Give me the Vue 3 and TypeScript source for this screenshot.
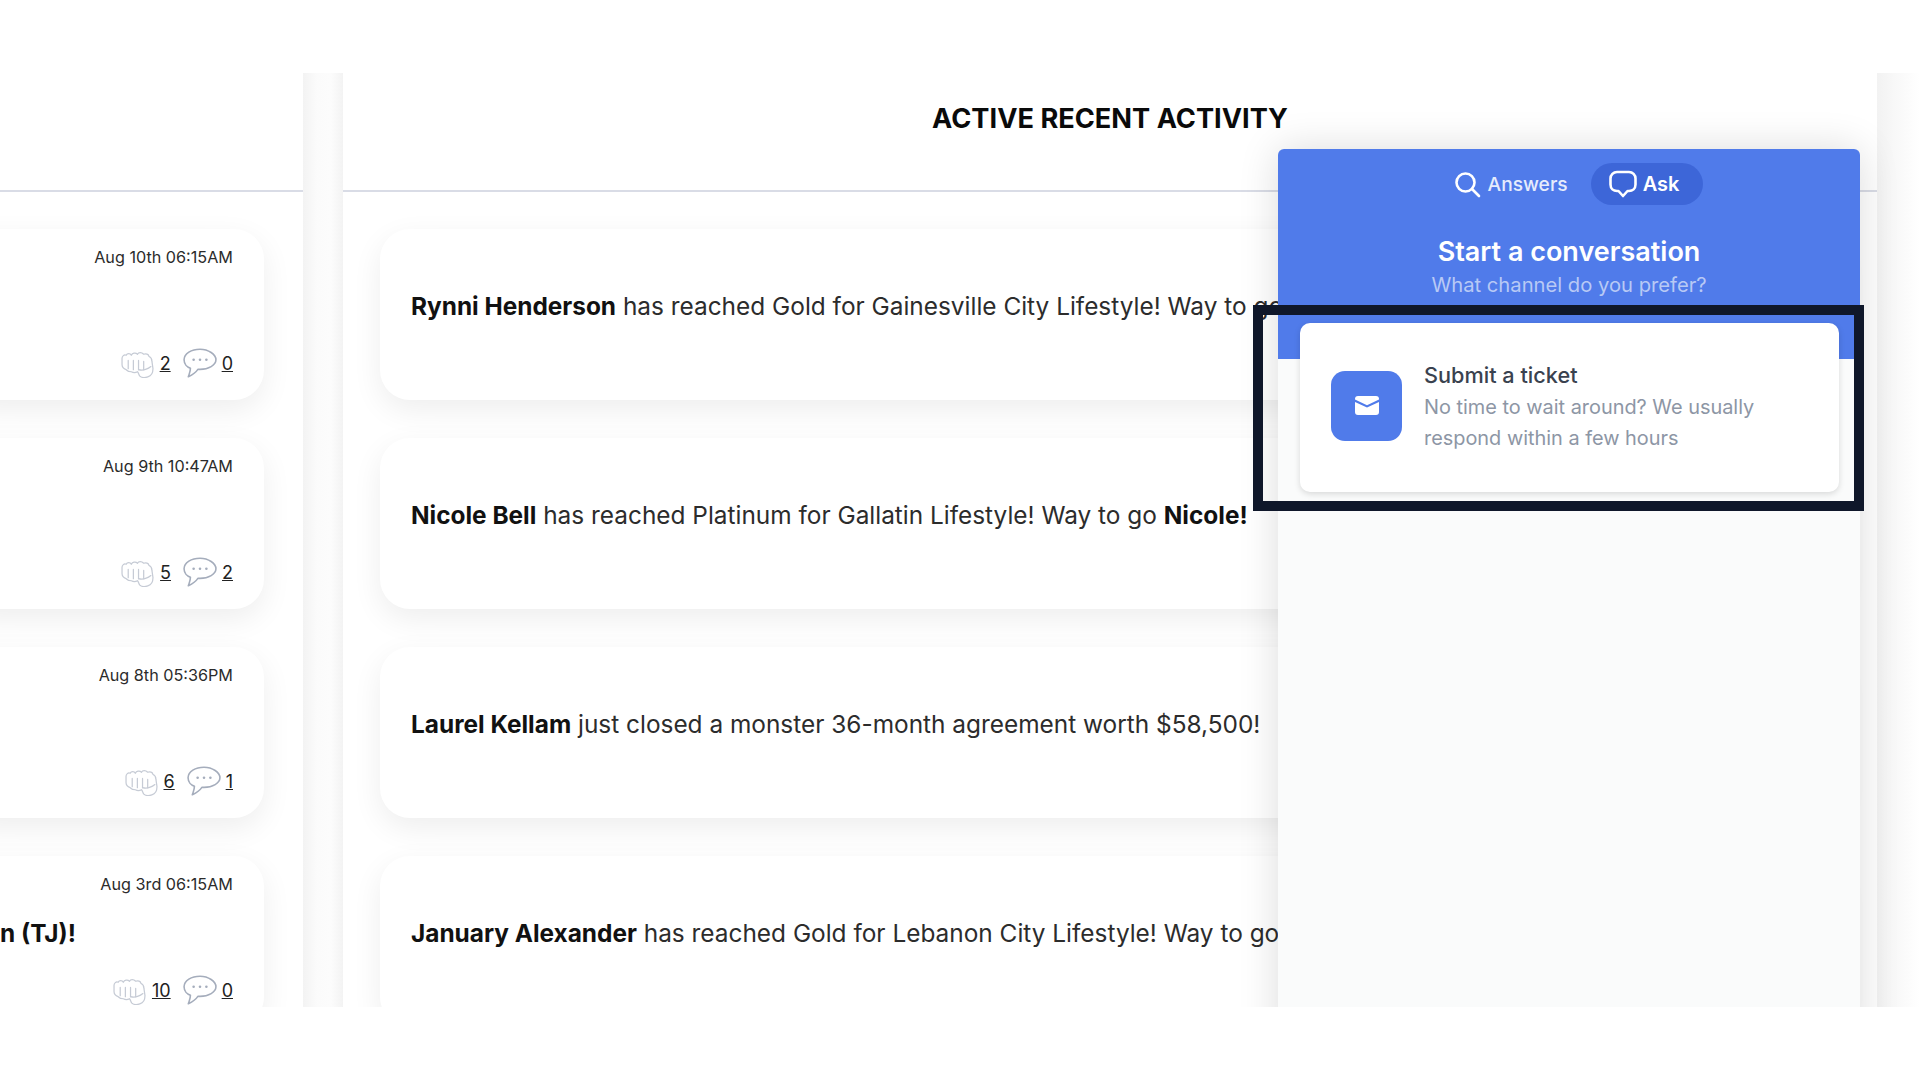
<script setup lang="ts">
interface LeftCard { date: string; text?: string; fist: string; chat: string }
const leftCards: LeftCard[] = [
  { date: 'Aug 10th 06:15AM', fist: '2', chat: '0' },
  { date: 'Aug 9th 10:47AM', fist: '5', chat: '2' },
  { date: 'Aug 8th 05:36PM', fist: '6', chat: '1' },
  { date: 'Aug 3rd 06:15AM', text: 'n (TJ)!', fist: '10', chat: '0' },
]
interface Row { name: string; rest: string; tail?: string }
const rows: Row[] = [
  { name: 'Rynni Henderson', rest: ' has reached Gold for Gainesville City Lifestyle! Way to go ', tail: 'Rynni!' },
  { name: 'Nicole Bell', rest: ' has reached Platinum for Gallatin Lifestyle! Way to go ', tail: 'Nicole!' },
  { name: 'Laurel Kellam', rest: ' just closed a monster 36-month agreement worth $58,500!' },
  { name: 'January Alexander', rest: ' has reached Gold for Lebanon City Lifestyle! Way to go ', tail: 'January!' },
]
</script>

<template>
  <div class="page">
    <div class="stage">
      <section class="col col-left">
        <header class="col-head"></header>
        <div class="list">
          <article v-for="c in leftCards" :key="c.date" class="card left-card">
            <div class="date">{{ c.date }}</div>
            <div class="left-text">{{ c.text }}</div>
            <div class="stats">
              <svg class="fist" viewBox="0 0 32 28" fill="none" stroke="#c6cbd5" stroke-width="1.2" stroke-linecap="round" stroke-linejoin="round">
                <path d="M1 9c0-2 2-4 4-3 1-2 4-2 5 0 1-2 4-3 6-1 1-2 4-2 6 0 2-1 5 0 5 2 2 1 3 3 3 5l1 7c0 4-2 7-5 8-3 1-6 1-8-1-1-2-1-3-2-4-2 1-4 1-6 0-2 0-4-1-5-2-3-1-4-3-4-5z" />
                <path d="M7 11v8M12 11v9M17 11v9M22 12v8" />
                <path d="M17 20c3 1 8 0 12-3" />
              </svg>
              <span class="num">{{ c.fist }}</span>
              <svg class="chat" viewBox="0 0 32 28" fill="none" stroke="#a5adbc" stroke-width="1.5" stroke-linejoin="round">
                <path d="M16 1C8 1 1 5 1 11c0 4 3 7 6 8 0 3-1 5-2 8 4-2 7-4 9-7h2c8 0 15-4 15-9S24 1 16 1z" />
                <circle cx="10" cy="11" r="1.2" fill="#a5adbc" stroke="none" />
                <circle cx="16" cy="11" r="1.2" fill="#a5adbc" stroke="none" />
                <circle cx="22" cy="11" r="1.2" fill="#a5adbc" stroke="none" />
              </svg>
              <span class="num">{{ c.chat }}</span>
            </div>
          </article>
        </div>
      </section>

      <div class="divider"></div>

      <section class="col col-right">
        <header class="col-head">
          <h2 class="title">ACTIVE RECENT ACTIVITY</h2>
        </header>
        <div class="list list-right">
          <article v-for="r in rows" :key="r.name" class="card right-card">
            <p class="row-text"><b>{{ r.name }}</b>{{ r.rest }}<b v-if="r.tail">{{ r.tail }}</b></p>
          </article>
        </div>
      </section>

      <div class="edge"></div>

      <aside class="widget">
        <div class="w-head">
          <nav class="tabs">
            <span class="tab">
              <svg width="28" height="28" viewBox="0 0 28 28" fill="none" stroke="#fff" stroke-width="2.6" stroke-linecap="round">
                <circle cx="12.5" cy="12.5" r="9" />
                <path d="M19 19l7 7" />
              </svg>
              Answers
            </span>
            <span class="tab tab-on">
              <svg width="28" height="28" viewBox="0 0 28 28" fill="none" stroke="#fff" stroke-width="2.6" stroke-linejoin="round">
                <path d="M8 2h12a6.500 6.500 0 0 1 6.500 6.500v6c0 4-3 6.500-6.500 6.500h-1.500L14 26l-4.500-5H8c-3.500 0-6.500-2.500-6.500-6.500v-6A6.500 6.500 0 0 1 8 2z" />
              </svg>
              Ask
            </span>
          </nav>
          <h3 class="w-title">Start a conversation</h3>
          <p class="w-sub">What channel do you prefer?</p>
        </div>
        <div class="ticket">
          <div class="t-icon">
            <svg width="24" height="19" viewBox="0 0 24 19">
              <path d="M3 0h18a3 3 0 0 1 3 3v.6l-12 5.600L0 3.600V3a3 3 0 0 1 3-3z" fill="#fff" />
              <path d="M0 6l12 5.600L24 6v10a3 3 0 0 1-3 3H3a3 3 0 0 1-3-3z" fill="#fff" />
            </svg>
          </div>
          <div class="t-body">
            <div class="t-title">Submit a ticket</div>
            <div class="t-desc">No time to wait around? We usually respond within a few hours</div>
          </div>
        </div>
      </aside>

      <div class="frame"></div>
    </div>
  </div>
</template>

<style scoped>
.page {
  height: 1080px;
  overflow: hidden;
  background: #fff;
  padding-top: 73px;
  box-sizing: border-box;
  font-family: Inter, "Liberation Sans", sans-serif;
}
.stage {
  position: relative;
  height: 934px;
  width: 1920px;
  overflow: hidden;
  display: flex;
  background: #fff;
}
.col { background: #fff; flex: none; box-sizing: border-box; }
.col-left { width: 303px; }
.col-right { width: 1534px; }
.divider {
  width: 40px;
  flex: none;
  background: linear-gradient(90deg, #f3f3f3 0, #fbfbfb 35%, #fcfcfc 70%, #f3f3f3 100%);
}
.edge {
  width: 43px;
  flex: none;
  background: linear-gradient(90deg, #f2f2f2 0, #f8f8f8 40%, #fff 100%);
}
.col-head {
  height: 119px;
  border-bottom: 2px solid #d9dce6;
  box-sizing: border-box;
  display: flex;
  align-items: center;
  justify-content: center;
  padding-bottom: 26px;
}
.title {
  margin: 0;
  font-size: 27.200px;
  line-height: 34px;
  font-weight: 700;
  color: #0a0a0a;
  white-space: nowrap;
}
.list {
  display: flex;
  flex-direction: column;
  gap: 38px;
  padding-top: 37px;
}
.card {
  background: #fff;
  border-radius: 30px;
  height: 171px;
  box-sizing: border-box;
  flex: none;
  box-shadow: 0 10px 30px rgba(0, 0, 0, 0.07);
}
.left-card {
  width: 304px;
  margin-left: -40px;
  padding: 18px 31px 0 40px;
  display: flex;
  flex-direction: column;
}
.date {
  font-size: 16.200px;
  line-height: 20px;
  color: #2b2b2b;
  text-align: right;
}
.left-text {
  font-size: 24.400px;
  font-weight: 700;
  color: #111;
  height: 30px;
  margin-top: 24px;
  white-space: nowrap;
  line-height: 30px;
}
.stats {
  margin-top: 26px;
  display: flex;
  justify-content: flex-end;
  align-items: center;
  height: 32px;
  font-size: 18px;
  color: #222;
}
.fist { width: 33px; height: 29px; }
.chat { width: 34px; height: 30px; margin: 0 5px 0 12px; }
.num { text-decoration: underline; margin-left: 6px; }
.chat + .num { margin-left: 0; }
.list-right { padding-left: 37px; padding-right: 37px; }
.right-card {
  display: flex;
  align-items: center;
  padding: 0 32px 18px 31px;
}
.row-text {
  margin: 0;
  font-size: 24.400px;
  color: #2c2c2c;
  white-space: nowrap;
}
.row-text b { font-weight: 700; color: #111; }
.widget {
  position: absolute;
  left: 1278px;
  top: 76px;
  width: 582px;
  height: 900px;
  background: #fafbfb;
  border-radius: 6px 6px 0 0;
  box-shadow: 0 0 40px rgba(0, 0, 0, 0.14);
}
.w-head {
  background: #507bea;
  height: 210px;
  border-radius: 6px 6px 0 0;
  display: flex;
  flex-direction: column;
  align-items: center;
  padding-top: 14px;
  box-sizing: border-box;
  color: #fff;
}
.tabs { display: flex; align-items: center; gap: 8px; height: 42px; }
.tab {
  display: flex;
  align-items: center;
  gap: 7px;
  height: 42px;
  padding: 0 15px 0 18px;
  border-radius: 21px;
  font-size: 19.200px;
  font-weight: 500;
  color: #e6ecfc;
}
.tab-on { background: #3d66d8; gap: 6px; font-size: 20px; font-weight: 600; color: #fff; padding: 0 24px 0 18px; }
.w-title {
  margin: 29px 0 0;
  font-size: 27px;
  line-height: 36px;
  font-weight: 600;
  color: #fff;
}
.w-sub {
  margin: 1px 0 0;
  font-size: 20.200px;
  line-height: 28px;
  color: #b8c9f5;
}
.ticket {
  position: absolute;
  left: 22px;
  right: 21px;
  top: 174px;
  height: 169px;
  background: #fff;
  border-radius: 10px;
  box-shadow: 0 2px 6px rgba(0, 0, 0, 0.14);
  display: flex;
  align-items: center;
  padding-left: 31px;
  box-sizing: border-box;
}
.t-icon {
  width: 71px;
  height: 70px;
  flex: none;
  background: #507bea;
  border-radius: 14px;
  display: flex;
  align-items: center;
  justify-content: center;
  margin-top: -4px;
}
.t-body { margin-left: 22px; width: 400px; }
.t-title { font-size: 21.700px; line-height: 28px; font-weight: 500; color: #3a424f; margin-bottom: 3px; }
.t-desc { font-size: 19.900px; line-height: 31px; color: #8d96a5; }
.frame {
  position: absolute;
  left: 1253px;
  top: 232px;
  width: 611px;
  height: 206px;
  box-sizing: border-box;
  border: 10px solid #0f172a;
  pointer-events: none;
}
</style>
